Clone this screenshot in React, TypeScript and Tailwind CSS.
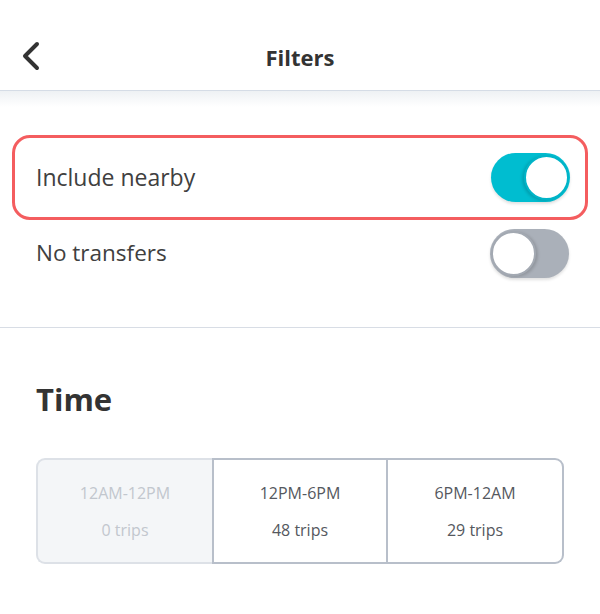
import React from "react";

function Toggle({ on }: { on: boolean }) {
  return on ? (
    <div className="relative h-[49px] w-[79px] rounded-full bg-[#00bdd0] shadow-[0_2px_3px_rgba(0,0,0,0.12)]">
      <div className="absolute right-[1px] top-[2px] h-[45px] w-[45px] rounded-full border-[2px] border-[#00b4c8] bg-white shadow-[-2px_1px_3px_rgba(0,0,0,0.15)]" />
    </div>
  ) : (
    <div className="relative h-[49px] w-[79px] rounded-full bg-[#aab0b9] shadow-[0_2px_3px_rgba(0,0,0,0.12)]">
      <div className="absolute left-[1px] top-[2px] h-[45px] w-[45px] rounded-full border-[2px] border-[#a3a9b2] bg-white shadow-[2px_1px_3px_rgba(0,0,0,0.15)]" />
    </div>
  );
}

export default function App() {
  const font = { fontFamily: "'Open Sans', Arial, sans-serif" };
  return (
    <div className="min-h-[614px] w-[600px] bg-white" style={font}>
      {/* Header */}
      <div className="relative flex h-[91px] items-center justify-center border-b border-[#d5dce6] bg-white pt-[24px]">
        <svg
          className="absolute left-[20px] top-[41px]"
          width="22"
          height="30"
          viewBox="0 0 22 30"
          fill="none"
        >
          <path d="M17 3 L5 15 L17 27" stroke="#333" strokeWidth="4" strokeLinecap="round" strokeLinejoin="round" />
        </svg>
        <span className="text-[22px] font-bold text-[#333]">Filters</span>
      </div>
      <div className="h-[16px] bg-linear-to-b from-[#eef1f4] to-white" />

      {/* Toggles */}
      <div className="pt-[28px]">
        <div className="mx-[12px] flex h-[85px] items-center justify-between rounded-[18px] border-[3px] border-[#f45d5f] pl-[21px] pr-[15px]">
          <span className="text-[23px] text-[#404040]">Include nearby</span>
          <Toggle on={true} />
        </div>
        <div className="flex h-[66px] items-center justify-between pl-[36px] pr-[31px]">
          <span className="text-[22.5px] text-[#404040]">No transfers</span>
          <Toggle on={false} />
        </div>
      </div>
      <div className="mt-[41px] border-b-[1.5px] border-[#d8dde5]" />

      {/* Time */}
      <div className="px-[36px] pt-[53px]">
        <h2 className="text-[31px] font-bold leading-[36px] text-[#333]">Time</h2>
        <div className="mt-[41px] grid h-[106px] grid-cols-3">
          <div className="flex flex-col items-center justify-center gap-[17px] rounded-l-[9px] border-y-2 border-l-2 border-[#dde1e7] bg-[#f4f6f8]">
            <span className="text-[16px] leading-[20px] text-[#c2c7ce]">12AM-12PM</span>
            <span className="text-[16px] leading-[20px] text-[#c2c7ce]">0 trips</span>
          </div>
          <div className="flex flex-col items-center justify-center gap-[17px] border-2 border-[#b8bfca]">
            <span className="text-[16px] leading-[20px] text-[#55585e]">12PM-6PM</span>
            <span className="text-[16px] leading-[20px] text-[#55585e]">48 trips</span>
          </div>
          <div className="flex flex-col items-center justify-center gap-[17px] rounded-r-[9px] border-y-2 border-r-2 border-[#b8bfca]">
            <span className="text-[16px] leading-[20px] text-[#55585e]">6PM-12AM</span>
            <span className="text-[16px] leading-[20px] text-[#55585e]">29 trips</span>
          </div>
        </div>
      </div>
    </div>
  );
}
